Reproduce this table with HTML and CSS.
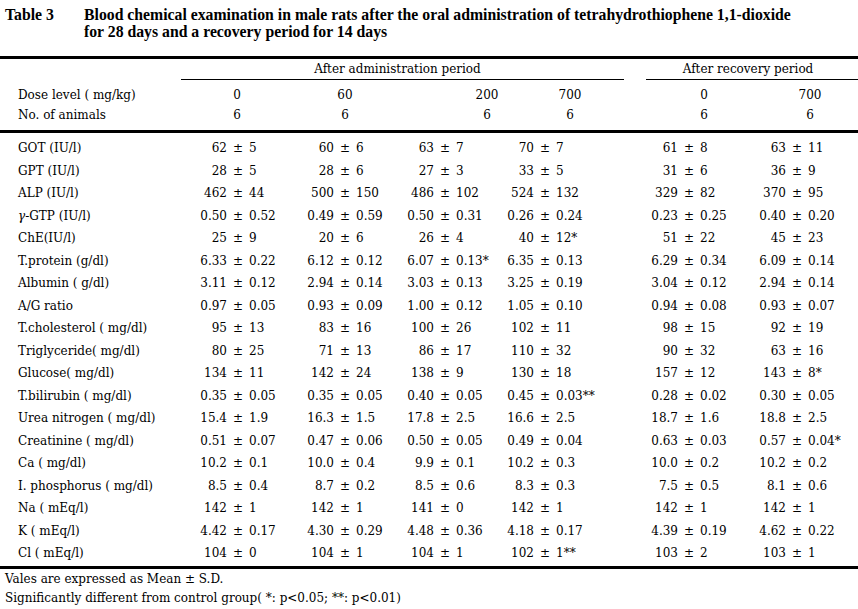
FILE: index.html
```html
<!DOCTYPE html>
<html>
<head>
<meta charset="utf-8">
<link rel="stylesheet" href="styles.css">
</head>
<body>
<div class="page">
  <div class="title">
    <span class="tno">Table 3</span>
    <span class="ttext">Blood chemical examination in male rats after the oral administration of tetrahydrothiophene 1,1-dioxide<br>for 28 days and a recovery period for 14 days</span>
  </div>
  <div class="table">
    <div class="group-row">
      <div class="grp adm">After administration period</div>
      <div class="grp rec">After recovery period</div>
    </div>
    <div class="head">
      <div class="hrow"><div class="lbl">Dose level ( mg/kg)</div><div class="hv">0</div><div class="hv">60</div><div class="hv">200</div><div class="hv">700</div><div class="hv">0</div><div class="hv">700</div></div>
      <div class="hrow"><div class="lbl">No. of animals</div><div class="hv">6</div><div class="hv">6</div><div class="hv">6</div><div class="hv">6</div><div class="hv">6</div><div class="hv">6</div></div>
    </div>
    <div class="body">
      <div class="row"><div class="lbl">GOT (IU/l)</div>
        <div class="v"><span class="m">62</span><span class="pm">±</span><span class="s">5</span></div>
        <div class="v"><span class="m">60</span><span class="pm">±</span><span class="s">6</span></div>
        <div class="v"><span class="m">63</span><span class="pm">±</span><span class="s">7</span></div>
        <div class="v"><span class="m">70</span><span class="pm">±</span><span class="s">7</span></div>
        <div class="v"><span class="m">61</span><span class="pm">±</span><span class="s">8</span></div>
        <div class="v"><span class="m">63</span><span class="pm">±</span><span class="s">11</span></div>
      </div>
      <div class="row"><div class="lbl">GPT (IU/l)</div>
        <div class="v"><span class="m">28</span><span class="pm">±</span><span class="s">5</span></div>
        <div class="v"><span class="m">28</span><span class="pm">±</span><span class="s">6</span></div>
        <div class="v"><span class="m">27</span><span class="pm">±</span><span class="s">3</span></div>
        <div class="v"><span class="m">33</span><span class="pm">±</span><span class="s">5</span></div>
        <div class="v"><span class="m">31</span><span class="pm">±</span><span class="s">6</span></div>
        <div class="v"><span class="m">36</span><span class="pm">±</span><span class="s">9</span></div>
      </div>
      <div class="row"><div class="lbl">ALP (IU/l)</div>
        <div class="v"><span class="m">462</span><span class="pm">±</span><span class="s">44</span></div>
        <div class="v"><span class="m">500</span><span class="pm">±</span><span class="s">150</span></div>
        <div class="v"><span class="m">486</span><span class="pm">±</span><span class="s">102</span></div>
        <div class="v"><span class="m">524</span><span class="pm">±</span><span class="s">132</span></div>
        <div class="v"><span class="m">329</span><span class="pm">±</span><span class="s">82</span></div>
        <div class="v"><span class="m">370</span><span class="pm">±</span><span class="s">95</span></div>
      </div>
      <div class="row"><div class="lbl"><i>γ</i>-GTP (IU/l)</div>
        <div class="v"><span class="m">0.50</span><span class="pm">±</span><span class="s">0.52</span></div>
        <div class="v"><span class="m">0.49</span><span class="pm">±</span><span class="s">0.59</span></div>
        <div class="v"><span class="m">0.50</span><span class="pm">±</span><span class="s">0.31</span></div>
        <div class="v"><span class="m">0.26</span><span class="pm">±</span><span class="s">0.24</span></div>
        <div class="v"><span class="m">0.23</span><span class="pm">±</span><span class="s">0.25</span></div>
        <div class="v"><span class="m">0.40</span><span class="pm">±</span><span class="s">0.20</span></div>
      </div>
      <div class="row"><div class="lbl">ChE(IU/l)</div>
        <div class="v"><span class="m">25</span><span class="pm">±</span><span class="s">9</span></div>
        <div class="v"><span class="m">20</span><span class="pm">±</span><span class="s">6</span></div>
        <div class="v"><span class="m">26</span><span class="pm">±</span><span class="s">4</span></div>
        <div class="v"><span class="m">40</span><span class="pm">±</span><span class="s">12*</span></div>
        <div class="v"><span class="m">51</span><span class="pm">±</span><span class="s">22</span></div>
        <div class="v"><span class="m">45</span><span class="pm">±</span><span class="s">23</span></div>
      </div>
      <div class="row"><div class="lbl">T.protein (g/dl)</div>
        <div class="v"><span class="m">6.33</span><span class="pm">±</span><span class="s">0.22</span></div>
        <div class="v"><span class="m">6.12</span><span class="pm">±</span><span class="s">0.12</span></div>
        <div class="v"><span class="m">6.07</span><span class="pm">±</span><span class="s">0.13*</span></div>
        <div class="v"><span class="m">6.35</span><span class="pm">±</span><span class="s">0.13</span></div>
        <div class="v"><span class="m">6.29</span><span class="pm">±</span><span class="s">0.34</span></div>
        <div class="v"><span class="m">6.09</span><span class="pm">±</span><span class="s">0.14</span></div>
      </div>
      <div class="row"><div class="lbl">Albumin ( g/dl)</div>
        <div class="v"><span class="m">3.11</span><span class="pm">±</span><span class="s">0.12</span></div>
        <div class="v"><span class="m">2.94</span><span class="pm">±</span><span class="s">0.14</span></div>
        <div class="v"><span class="m">3.03</span><span class="pm">±</span><span class="s">0.13</span></div>
        <div class="v"><span class="m">3.25</span><span class="pm">±</span><span class="s">0.19</span></div>
        <div class="v"><span class="m">3.04</span><span class="pm">±</span><span class="s">0.12</span></div>
        <div class="v"><span class="m">2.94</span><span class="pm">±</span><span class="s">0.14</span></div>
      </div>
      <div class="row"><div class="lbl">A/G ratio</div>
        <div class="v"><span class="m">0.97</span><span class="pm">±</span><span class="s">0.05</span></div>
        <div class="v"><span class="m">0.93</span><span class="pm">±</span><span class="s">0.09</span></div>
        <div class="v"><span class="m">1.00</span><span class="pm">±</span><span class="s">0.12</span></div>
        <div class="v"><span class="m">1.05</span><span class="pm">±</span><span class="s">0.10</span></div>
        <div class="v"><span class="m">0.94</span><span class="pm">±</span><span class="s">0.08</span></div>
        <div class="v"><span class="m">0.93</span><span class="pm">±</span><span class="s">0.07</span></div>
      </div>
      <div class="row"><div class="lbl">T.cholesterol ( mg/dl)</div>
        <div class="v"><span class="m">95</span><span class="pm">±</span><span class="s">13</span></div>
        <div class="v"><span class="m">83</span><span class="pm">±</span><span class="s">16</span></div>
        <div class="v"><span class="m">100</span><span class="pm">±</span><span class="s">26</span></div>
        <div class="v"><span class="m">102</span><span class="pm">±</span><span class="s">11</span></div>
        <div class="v"><span class="m">98</span><span class="pm">±</span><span class="s">15</span></div>
        <div class="v"><span class="m">92</span><span class="pm">±</span><span class="s">19</span></div>
      </div>
      <div class="row"><div class="lbl">Triglyceride( mg/dl)</div>
        <div class="v"><span class="m">80</span><span class="pm">±</span><span class="s">25</span></div>
        <div class="v"><span class="m">71</span><span class="pm">±</span><span class="s">13</span></div>
        <div class="v"><span class="m">86</span><span class="pm">±</span><span class="s">17</span></div>
        <div class="v"><span class="m">110</span><span class="pm">±</span><span class="s">32</span></div>
        <div class="v"><span class="m">90</span><span class="pm">±</span><span class="s">32</span></div>
        <div class="v"><span class="m">63</span><span class="pm">±</span><span class="s">16</span></div>
      </div>
      <div class="row"><div class="lbl">Glucose( mg/dl)</div>
        <div class="v"><span class="m">134</span><span class="pm">±</span><span class="s">11</span></div>
        <div class="v"><span class="m">142</span><span class="pm">±</span><span class="s">24</span></div>
        <div class="v"><span class="m">138</span><span class="pm">±</span><span class="s">9</span></div>
        <div class="v"><span class="m">130</span><span class="pm">±</span><span class="s">18</span></div>
        <div class="v"><span class="m">157</span><span class="pm">±</span><span class="s">12</span></div>
        <div class="v"><span class="m">143</span><span class="pm">±</span><span class="s">8*</span></div>
      </div>
      <div class="row"><div class="lbl">T.bilirubin ( mg/dl)</div>
        <div class="v"><span class="m">0.35</span><span class="pm">±</span><span class="s">0.05</span></div>
        <div class="v"><span class="m">0.35</span><span class="pm">±</span><span class="s">0.05</span></div>
        <div class="v"><span class="m">0.40</span><span class="pm">±</span><span class="s">0.05</span></div>
        <div class="v"><span class="m">0.45</span><span class="pm">±</span><span class="s">0.03**</span></div>
        <div class="v"><span class="m">0.28</span><span class="pm">±</span><span class="s">0.02</span></div>
        <div class="v"><span class="m">0.30</span><span class="pm">±</span><span class="s">0.05</span></div>
      </div>
      <div class="row"><div class="lbl">Urea nitrogen ( mg/dl)</div>
        <div class="v"><span class="m">15.4</span><span class="pm">±</span><span class="s">1.9</span></div>
        <div class="v"><span class="m">16.3</span><span class="pm">±</span><span class="s">1.5</span></div>
        <div class="v"><span class="m">17.8</span><span class="pm">±</span><span class="s">2.5</span></div>
        <div class="v"><span class="m">16.6</span><span class="pm">±</span><span class="s">2.5</span></div>
        <div class="v"><span class="m">18.7</span><span class="pm">±</span><span class="s">1.6</span></div>
        <div class="v"><span class="m">18.8</span><span class="pm">±</span><span class="s">2.5</span></div>
      </div>
      <div class="row"><div class="lbl">Creatinine ( mg/dl)</div>
        <div class="v"><span class="m">0.51</span><span class="pm">±</span><span class="s">0.07</span></div>
        <div class="v"><span class="m">0.47</span><span class="pm">±</span><span class="s">0.06</span></div>
        <div class="v"><span class="m">0.50</span><span class="pm">±</span><span class="s">0.05</span></div>
        <div class="v"><span class="m">0.49</span><span class="pm">±</span><span class="s">0.04</span></div>
        <div class="v"><span class="m">0.63</span><span class="pm">±</span><span class="s">0.03</span></div>
        <div class="v"><span class="m">0.57</span><span class="pm">±</span><span class="s">0.04*</span></div>
      </div>
      <div class="row"><div class="lbl">Ca ( mg/dl)</div>
        <div class="v"><span class="m">10.2</span><span class="pm">±</span><span class="s">0.1</span></div>
        <div class="v"><span class="m">10.0</span><span class="pm">±</span><span class="s">0.4</span></div>
        <div class="v"><span class="m">9.9</span><span class="pm">±</span><span class="s">0.1</span></div>
        <div class="v"><span class="m">10.2</span><span class="pm">±</span><span class="s">0.3</span></div>
        <div class="v"><span class="m">10.0</span><span class="pm">±</span><span class="s">0.2</span></div>
        <div class="v"><span class="m">10.2</span><span class="pm">±</span><span class="s">0.2</span></div>
      </div>
      <div class="row"><div class="lbl">I. phosphorus ( mg/dl)</div>
        <div class="v"><span class="m">8.5</span><span class="pm">±</span><span class="s">0.4</span></div>
        <div class="v"><span class="m">8.7</span><span class="pm">±</span><span class="s">0.2</span></div>
        <div class="v"><span class="m">8.5</span><span class="pm">±</span><span class="s">0.6</span></div>
        <div class="v"><span class="m">8.3</span><span class="pm">±</span><span class="s">0.3</span></div>
        <div class="v"><span class="m">7.5</span><span class="pm">±</span><span class="s">0.5</span></div>
        <div class="v"><span class="m">8.1</span><span class="pm">±</span><span class="s">0.6</span></div>
      </div>
      <div class="row"><div class="lbl">Na ( mEq/l)</div>
        <div class="v"><span class="m">142</span><span class="pm">±</span><span class="s">1</span></div>
        <div class="v"><span class="m">142</span><span class="pm">±</span><span class="s">1</span></div>
        <div class="v"><span class="m">141</span><span class="pm">±</span><span class="s">0</span></div>
        <div class="v"><span class="m">142</span><span class="pm">±</span><span class="s">1</span></div>
        <div class="v"><span class="m">142</span><span class="pm">±</span><span class="s">1</span></div>
        <div class="v"><span class="m">142</span><span class="pm">±</span><span class="s">1</span></div>
      </div>
      <div class="row"><div class="lbl">K ( mEq/l)</div>
        <div class="v"><span class="m">4.42</span><span class="pm">±</span><span class="s">0.17</span></div>
        <div class="v"><span class="m">4.30</span><span class="pm">±</span><span class="s">0.29</span></div>
        <div class="v"><span class="m">4.48</span><span class="pm">±</span><span class="s">0.36</span></div>
        <div class="v"><span class="m">4.18</span><span class="pm">±</span><span class="s">0.17</span></div>
        <div class="v"><span class="m">4.39</span><span class="pm">±</span><span class="s">0.19</span></div>
        <div class="v"><span class="m">4.62</span><span class="pm">±</span><span class="s">0.22</span></div>
      </div>
      <div class="row"><div class="lbl">Cl ( mEq/l)</div>
        <div class="v"><span class="m">104</span><span class="pm">±</span><span class="s">0</span></div>
        <div class="v"><span class="m">104</span><span class="pm">±</span><span class="s">1</span></div>
        <div class="v"><span class="m">104</span><span class="pm">±</span><span class="s">1</span></div>
        <div class="v"><span class="m">102</span><span class="pm">±</span><span class="s">1**</span></div>
        <div class="v"><span class="m">103</span><span class="pm">±</span><span class="s">2</span></div>
        <div class="v"><span class="m">103</span><span class="pm">±</span><span class="s">1</span></div>
      </div>
    </div>
  </div>
  <div class="notes">
    <div>Vales are expressed as Mean ± S.D.</div>
    <div>Significantly different from control group( *: p&lt;0.05; **: p&lt;0.01)</div>
  </div>
</div>
</body>
</html>
```

FILE: styles.css
```css
html, body {
  margin: 0;
  padding: 0;
  background: #fff;
  color: #000;
}

.page {
  width: 858px;
  font-family: "DejaVu Serif", "Liberation Serif", serif;
  font-size: 12px;
}

.title {
  display: flex;
  height: 56px;
  box-sizing: border-box;
  padding: 6px 0 0 5px;
  font-family: "Liberation Serif", serif;
  font-weight: bold;
  font-size: 15.75px;
  line-height: 17px;
}

.tno {
  width: 79px;
  flex: none;
}

.table {
  border-top: 3px solid #000;
  border-bottom: 3px solid #000;
}

.group-row {
  display: grid;
  grid-template-columns: 181px 443px 22px 212px;
}

.grp {
  text-align: center;
  line-height: 20px;
  border-bottom: 1px solid #000;
}

.adm {
  grid-column: 2;
  padding-right: 10px;
}

.rec {
  grid-column: 4;
  padding-right: 8px;
}

.head {
  padding: 5px 0;
  border-bottom: 3px solid #000;
}

.hrow {
  display: flex;
  line-height: 20px;
}

.hrow .lbl {
  width: 189px;
  flex: none;
}

.hv {
  width: 60px;
  flex: none;
  text-align: center;
}

.hv:nth-child(3) { margin-left: 48px; }
.hv:nth-child(4) { margin-left: 82px; }
.hv:nth-child(5) { margin-left: 23px; }
.hv:nth-child(6) { margin-left: 74px; }
.hv:nth-child(7) { margin-left: 46px; }

.lbl {
  padding-left: 18px;
  white-space: nowrap;
}

.body {
  padding: 4px 0 1px;
}

.row {
  display: grid;
  grid-template-columns: 183px 107px 100px 100px 144px 108px 116px;
  height: 22.5px;
  line-height: 22.5px;
  white-space: nowrap;
}

.v {
  display: flex;
}

.m {
  width: 44px;
  text-align: right;
  flex: none;
}

.pm {
  width: 22px;
  text-align: center;
  flex: none;
}

.s {
  text-align: left;
}

.notes {
  padding: 1px 0 0 5px;
  line-height: 19px;
}
```
